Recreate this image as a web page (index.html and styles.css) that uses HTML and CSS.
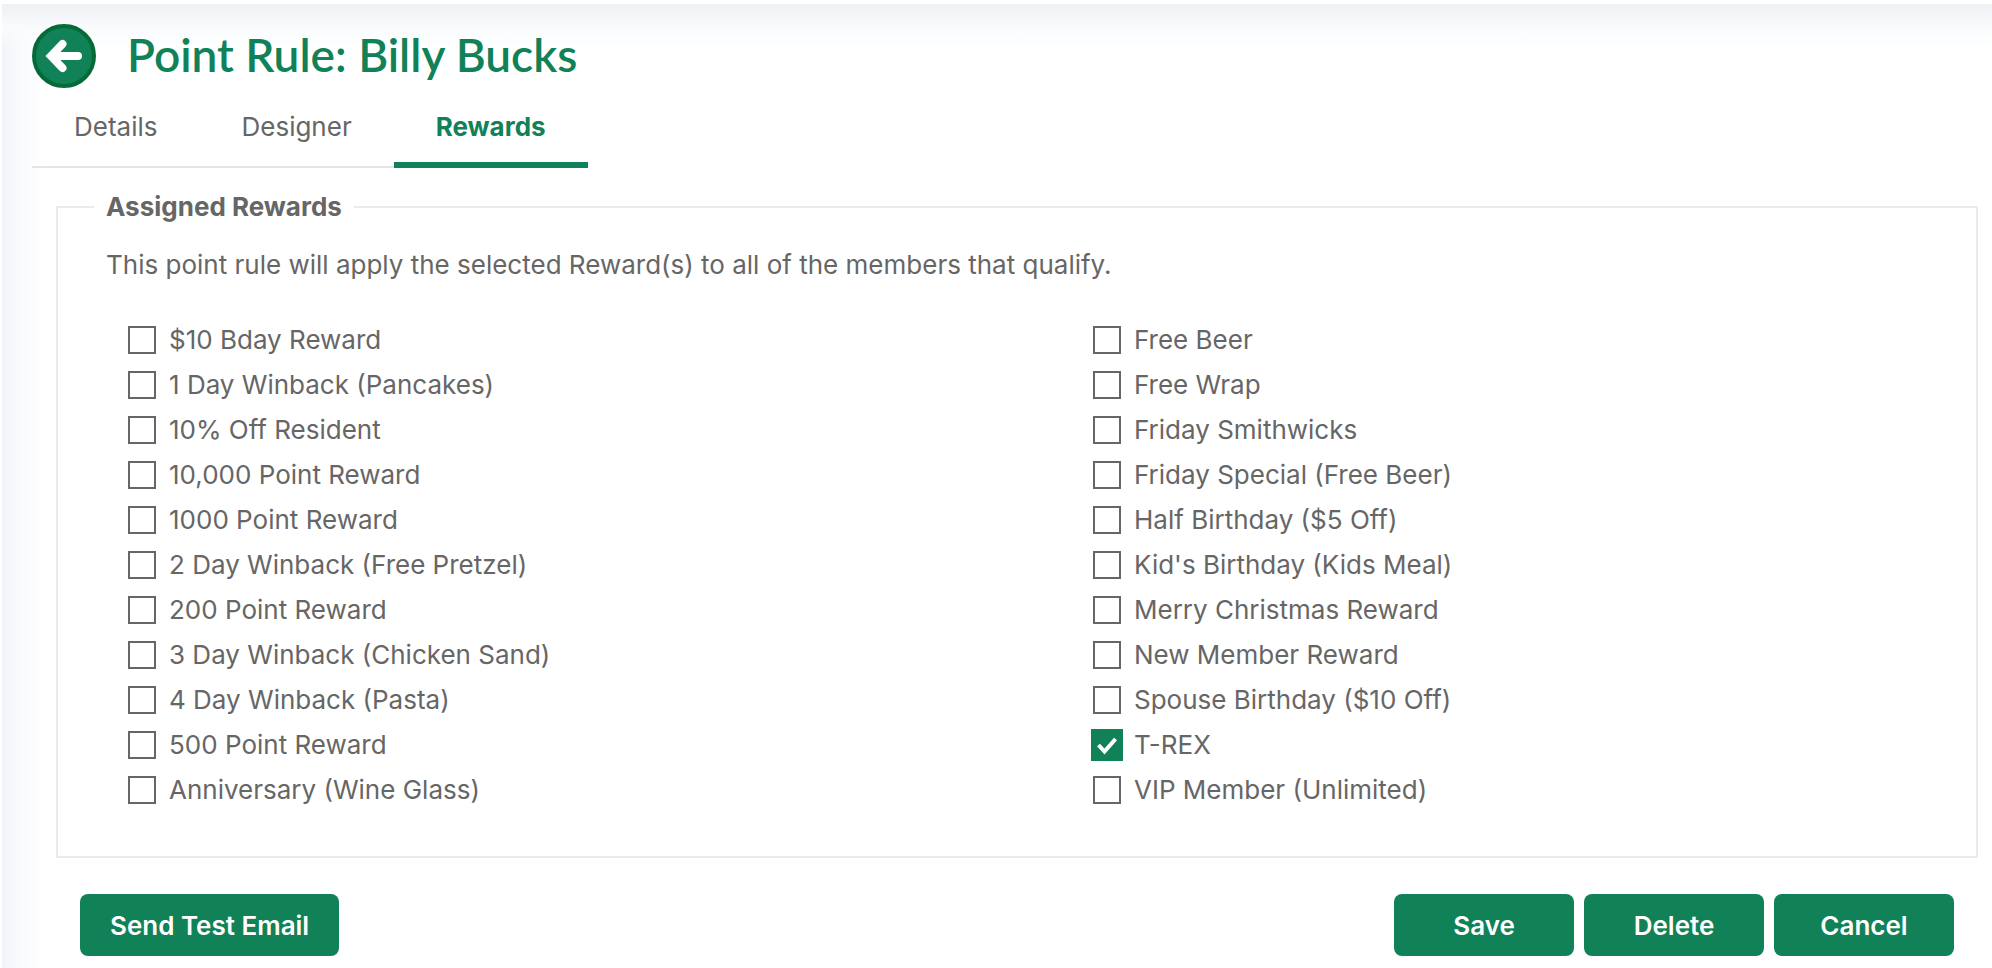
FILE: index.html
```html
<!DOCTYPE html>
<html lang="en">
<head>
    <meta charset="UTF-8">
    <meta name="viewport" content="width=device-width, initial-scale=1.0">
    <title>Point Rule: Billy Bucks</title>
    <link rel="stylesheet" href="styles.css">
</head>
<body>

    <main class="panel">
        <header class="page-header">
            <a class="back" href="#" aria-label="Back">
                <svg viewBox="0 0 64 64" width="64" height="64">
                    <circle cx="32" cy="32" r="30" fill="#118257" stroke="#046a37" stroke-width="4"/>
                    <path d="M46 32H20M30.500 20L19 32L30.500 44" fill="none" stroke="#fff" stroke-width="8" stroke-linecap="round"/>
                </svg>
            </a>
            <h1>Point Rule: Billy Bucks</h1>
        </header>

        <nav class="tabs">
            <a href="#details">Details</a>
            <a href="#designer">Designer</a>
            <a href="#rewards" class="active">Rewards</a>
        </nav>

        <form>
            <fieldset class="rewards">
                <legend>Assigned Rewards</legend>
                <p>This point rule will apply the selected Reward(s) to all of the members that qualify.</p>
                <div class="columns">
                    <ul>
                        <li><label><input type="checkbox"> $10 Bday Reward</label></li>
                        <li><label><input type="checkbox"> 1 Day Winback (Pancakes)</label></li>
                        <li><label><input type="checkbox"> 10% Off Resident</label></li>
                        <li><label><input type="checkbox"> 10,000 Point Reward</label></li>
                        <li><label><input type="checkbox"> 1000 Point Reward</label></li>
                        <li><label><input type="checkbox"> 2 Day Winback (Free Pretzel)</label></li>
                        <li><label><input type="checkbox"> 200 Point Reward</label></li>
                        <li><label><input type="checkbox"> 3 Day Winback (Chicken Sand)</label></li>
                        <li><label><input type="checkbox"> 4 Day Winback (Pasta)</label></li>
                        <li><label><input type="checkbox"> 500 Point Reward</label></li>
                        <li><label><input type="checkbox"> Anniversary (Wine Glass)</label></li>
                    </ul>
                    <ul>
                        <li><label><input type="checkbox"> Free Beer</label></li>
                        <li><label><input type="checkbox"> Free Wrap</label></li>
                        <li><label><input type="checkbox"> Friday Smithwicks</label></li>
                        <li><label><input type="checkbox"> Friday Special (Free Beer)</label></li>
                        <li><label><input type="checkbox"> Half Birthday ($5 Off)</label></li>
                        <li><label><input type="checkbox"> Kid's Birthday (Kids Meal)</label></li>
                        <li><label><input type="checkbox"> Merry Christmas Reward</label></li>
                        <li><label><input type="checkbox"> New Member Reward</label></li>
                        <li><label><input type="checkbox"> Spouse Birthday ($10 Off)</label></li>
                        <li><label><input type="checkbox" checked> T-REX</label></li>
                        <li><label><input type="checkbox"> VIP Member (Unlimited)</label></li>
                    </ul>
                </div>
            </fieldset>

            <div class="actions">
                <button type="button" class="test">Send Test Email</button>
                <button type="submit">Save</button>
                <button type="button">Delete</button>
                <button type="button">Cancel</button>
            </div>
        </form>
    </main>

</body>
</html>
```
FILE: styles.css
```css
/* General Styling */
* {
    box-sizing: border-box;
}
body {
    margin: 0;
    padding: 4px 0 0 2px;
    background: #fff;
    color: #666;
    font-family: Inter, 'Liberation Sans', sans-serif;
    font-size: 26px;
    line-height: 32px;
}
.panel {
    min-height: calc(100vh - 4px);
    padding: 20px 14px 12px 30px;
    background:
        linear-gradient(to bottom, #eff0f5, #f9fbfd 24px, rgba(255, 255, 255, 0) 44px),
        linear-gradient(to right, #f2f4f9, #fafbfd 20px, #fff 44px);
}

/* Header */
.page-header {
    display: flex;
    align-items: flex-start;
    gap: 31px;
}
.back {
    display: block;
    height: 64px;
}
h1 {
    margin: 0;
    color: #118257;
    font-family: Lato, sans-serif;
    font-size: 46px;
    font-weight: 600;
    line-height: 62px;
}

/* Tabs */
.tabs {
    display: flex;
    width: fit-content;
    border-bottom: 2px solid #e5e5e5;
}
.tabs a {
    padding: 23px 42px 19px;
    margin-bottom: -2px;
    border-bottom: 6px solid transparent;
    color: #666;
    text-decoration: none;
}
.tabs .active {
    border-color: #118257;
    color: #118257;
    font-weight: 700;
}

/* Rewards */
.rewards {
    margin: 23px 0 0 24px;
    padding: 26px 48px 44px 36px;
    border: 2px solid #ebebeb;
    min-width: 0;
}
.rewards legend {
    padding: 0 12px;
    font-weight: 700;
}
.rewards p {
    margin: 0 0 36px 12px;
}
.columns {
    display: grid;
    grid-template-columns: 1fr 1fr;
    gap: 130px;
    margin-left: 34px;
}
.columns ul {
    margin: 0;
    padding: 0;
    list-style: none;
}
.columns label {
    display: flex;
    align-items: center;
    gap: 13px;
    height: 45px;
}
.columns input {
    appearance: none;
    flex: none;
    width: 28px;
    height: 28px;
    margin: 0;
    border: 2px solid #666;
    background: #fff;
}
.columns input:checked {
    width: 32px;
    height: 32px;
    margin: 0 -2px;
    border: none;
    background: #118257 url("data:image/svg+xml,%3Csvg xmlns='http://www.w3.org/2000/svg' viewBox='0 0 32 32'%3E%3Cpath d='M7.500 16L13.500 22.500L24.500 10' fill='none' stroke='white' stroke-width='4'/%3E%3C/svg%3E") center / 32px no-repeat;
}

/* Buttons */
.actions {
    display: flex;
    gap: 10px;
    padding: 36px 24px 0 48px;
}
button {
    min-width: 180px;
    height: 62px;
    padding: 0 30px;
    border: none;
    border-radius: 8px;
    background: #118257;
    color: #fff;
    font-family: inherit;
    font-size: 26px;
    font-weight: 600;
    cursor: pointer;
}
.test {
    margin-right: auto;
}
```
